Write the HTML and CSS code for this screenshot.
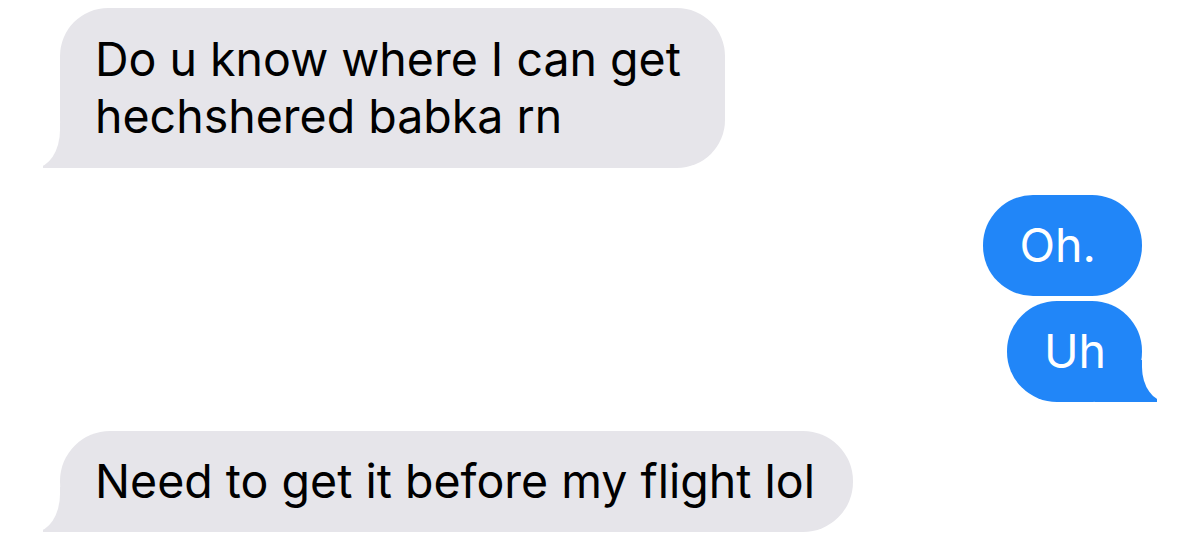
FILE: index.html
```
<!DOCTYPE html>
<html lang="en">
<head>
<meta charset="utf-8">
<link rel="stylesheet" href="styles.css">
</head>
<body>
<div class="chat">
  <div class="bubble them tail b1">Do u know where I can get<br>hechshered babka rn</div>
  <div class="bubble me b2">Oh.</div>
  <div class="bubble me tail b3">Uh</div>
  <div class="bubble them tail b4">Need to get it before my flight lol</div>
</div>
</body>
</html>
```
FILE: styles.css
```
html {
  background: #ffffff;
}
html, body {
  margin: 0;
  padding: 0;
  overflow: hidden;
}
.chat {
  width: 1200px;
  height: 546px;
  display: flex;
  flex-direction: column;
  padding-top: 8px;
  box-sizing: border-box;
  font-family: Inter, "Noto Sans", sans-serif;
  font-size: 46.5px;
  line-height: 57px;
}
.bubble {
  position: relative;
  isolation: isolate;
  padding: 22px 36px 22px 35px;
  border-radius: 50px;
  white-space: nowrap;
}
.them {
  align-self: flex-start;
  margin-left: 60px;
  background: #e6e5ea;
  color: #000;
}
.me {
  align-self: flex-end;
  margin-right: 58px;
  background: #2186f8;
  color: #fff;
}
.b1 { border-radius: 48px; padding-top: 23px; padding-bottom: 23px; padding-right: 44px; }
.b2 { margin-top: 27px; padding-left: 37px; padding-right: 46px; }
.b3 { margin-top: 5px; padding-left: 37px; }
.b4 { margin-top: 29px; padding-right: 38px; }

.tail::before,
.tail::after {
  content: "";
  position: absolute;
  bottom: 0;
  z-index: -1;
}
.them.tail::before {
  left: -17px;
  width: 70px;
  height: 45px;
  background: #e6e5ea;
}
.them.tail::after {
  left: -42px;
  width: 42px;
  height: 45px;
  background: #ffffff;
  border-bottom-right-radius: 25px 38px;
}
.me.tail::before {
  right: -15px;
  width: 62px;
  height: 42px;
  background: #2186f8;
}
.me.tail::after {
  right: -40px;
  width: 40px;
  height: 42px;
  background: #ffffff;
  border-bottom-left-radius: 25px 35px;
}
```
